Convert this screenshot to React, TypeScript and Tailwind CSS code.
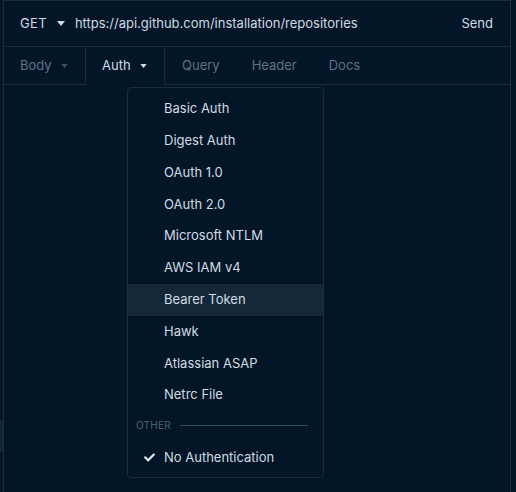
import { FaCheck } from 'react-icons/fa';

const authTypes = [
  'Basic Auth',
  'Digest Auth',
  'OAuth 1.0',
  'OAuth 2.0',
  'Microsoft NTLM',
  'AWS IAM v4',
  'Bearer Token',
  'Hawk',
  'Atlassian ASAP',
  'Netrc File',
];

function Caret({ className }: { className?: string }) {
  return (
    <svg viewBox="0 0 8 5" className={className} fill="currentColor">
      <path d="M0 0h8L4 5z" />
    </svg>
  );
}

export default function App() {
  return (
    <div
      className="flex w-[516px] h-[492px] bg-[#021627] text-[13px] text-[#d3dbe4] overflow-hidden"
      style={{ fontFamily: 'Inter, "Noto Sans", sans-serif' }}
    >
      {/* left edge strip */}
      <div className="flex w-[3px] flex-col">
        <div className="mt-[420px] h-[32px] bg-[#142635]" />
      </div>

      <div className="relative flex w-[508px] flex-col border-x border-[#1b2c3a]">
        {/* Request line */}
        <div className="flex h-[47px] items-center border-y border-[#1b2c3a] pl-4 pr-[17px]">
          <span className="tracking-wide">GET</span>
          <Caret className="ml-[10px] h-[5px] w-[8px] text-[#d3dbe4]" />
          <span className="ml-[10px] flex-1">https://api.github.com/installation/repositories</span>
          <span>Send</span>
        </div>

        {/* Tabs */}
        <div className="flex h-[38px] items-stretch">
          <div className="flex w-[82px] items-center gap-[9px] border-r border-b border-[#1b2c3a] pl-4 text-[#5e7383]">
            Body
            <Caret className="h-[4px] w-[7px] text-[#3d5263]" />
          </div>
          <div className="flex w-[79px] items-center gap-[9px] border-r border-[#1b2c3a] pl-4">
            Auth
            <Caret className="h-[4px] w-[7px] text-[#d3dbe4]" />
          </div>
          <div className="flex flex-1 items-center border-b border-[#1b2c3a] pl-[1px] text-[#5e7383]">
            <span className="px-4">Query</span>
            <span className="px-4">Header</span>
            <span className="px-4">Docs</span>
          </div>
        </div>

        {/* Auth dropdown */}
        <div className="absolute left-[123px] top-[87px] w-[197px] rounded-[4px] border border-[#1b2c3a] bg-[#021627] pt-[5px] pb-[1px]">
          {authTypes.map((t) => (
            <div
              key={t}
              className={
                t === 'Bearer Token'
                  ? 'flex h-[31.8px] items-center bg-[#13293a] pl-[36px]'
                  : 'flex h-[31.8px] items-center pl-[36px]'
              }
            >
              {t}
            </div>
          ))}
          <div className="flex h-[29px] items-center gap-[9px] pl-[8px] pr-[15px] text-[10px] tracking-wide text-[#506575]">
            OTHER
            <div className="h-px flex-1 bg-[#3a4d5c]" />
          </div>
          <div className="flex h-[36px] items-center pl-[16px]">
            <FaCheck className="h-[11px] w-[11px] text-[#e6ecf2]" />
            <span className="ml-[9px]">No Authentication</span>
          </div>
        </div>
      </div>
    </div>
  );
}
